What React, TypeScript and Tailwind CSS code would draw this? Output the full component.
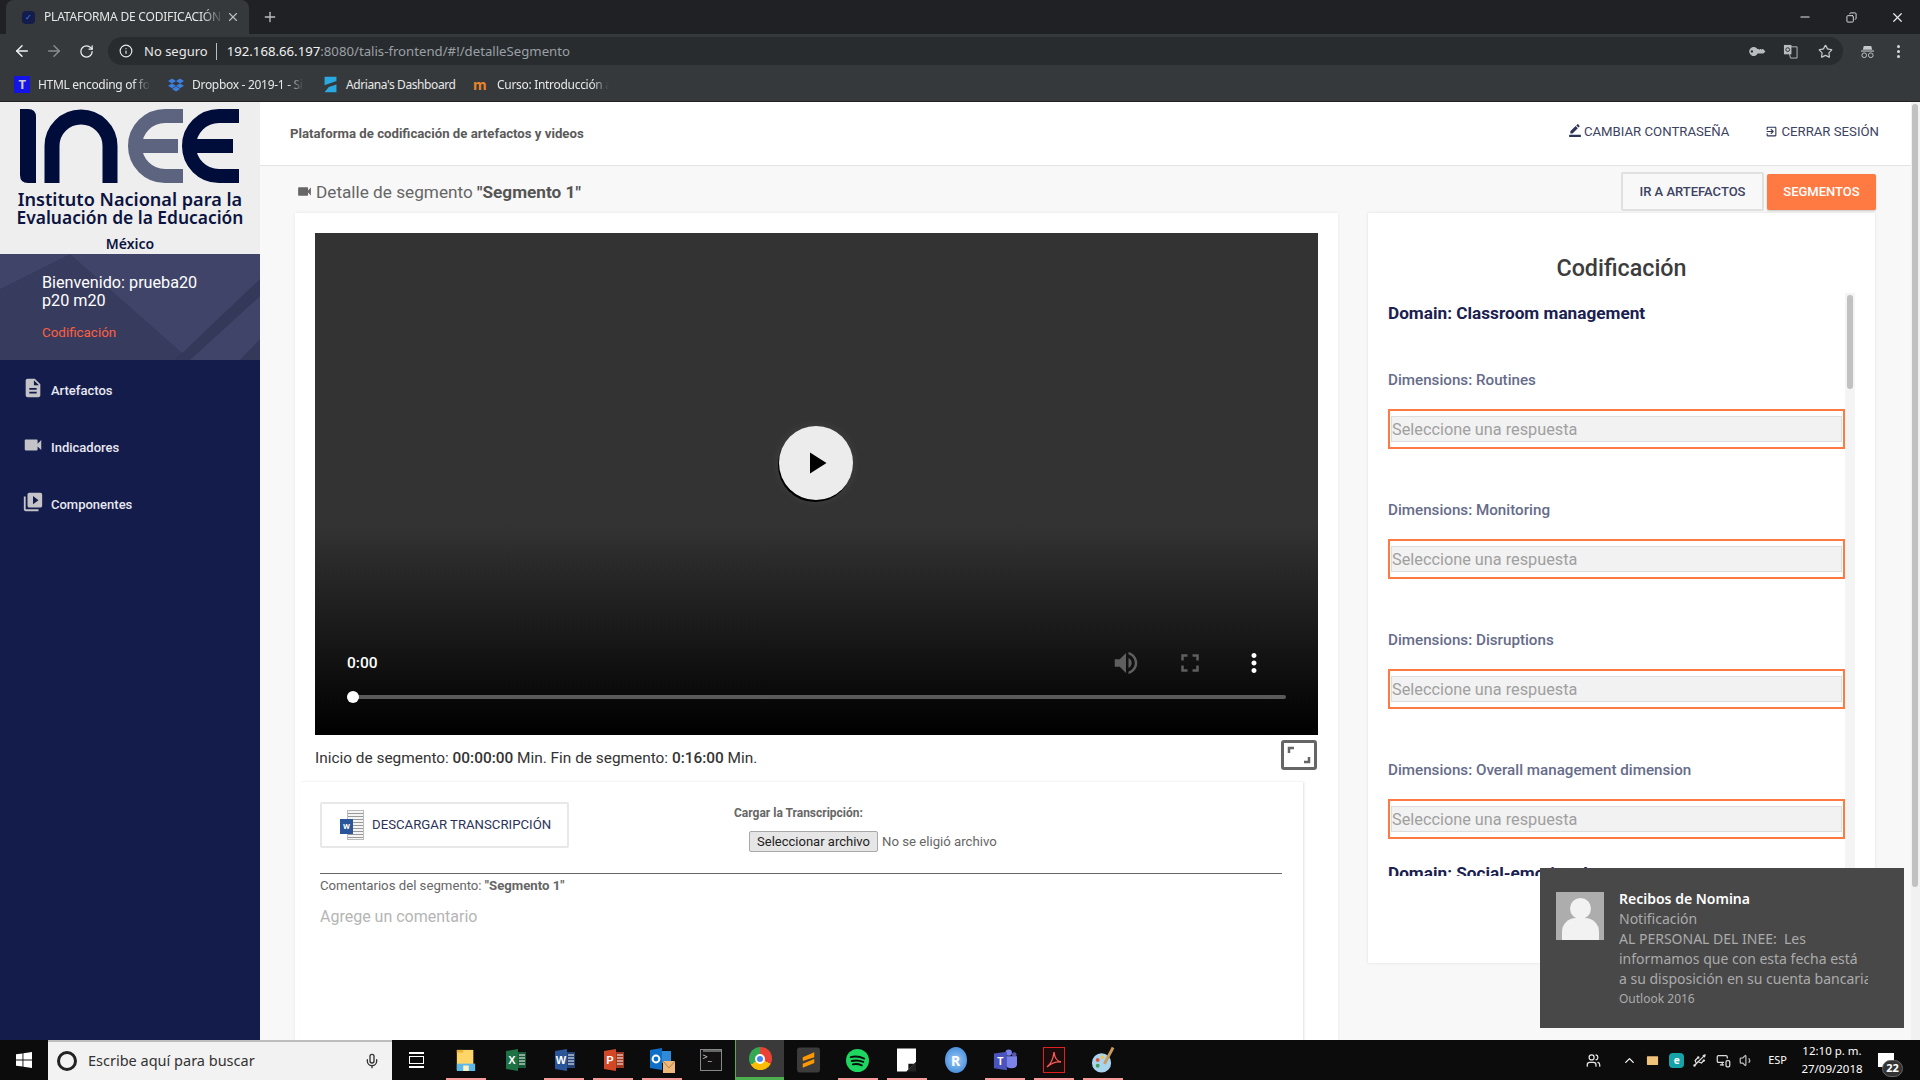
import { ArrowLeft, ArrowRight, RotateCw, Info, Star, X, Plus, Minus, Copy, ChevronUp, Mail, Mic, Users, Volume1, MonitorSmartphone, Usb } from "lucide-react";
import { FaKey } from "react-icons/fa";
import { MdDescription, MdVideocam, MdVideoLibrary, MdBorderColor, MdExitToApp, MdVolumeUp, MdFullscreen, MdMoreVert, MdPlayArrow } from "react-icons/md";

const DIMENSIONS = ["Routines", "Monitoring", "Disruptions", "Overall management dimension"];

const NAV = [
  { label: "Artefactos", Icon: MdDescription },
  { label: "Indicadores", Icon: MdVideocam },
  { label: "Componentes", Icon: MdVideoLibrary },
];

function BrowserChrome() {
  return (
    <div className="shrink-0 font-['Noto_Sans',sans-serif] text-white">
      <div className="flex h-[34px] items-end bg-[#202124] pl-[6px]">
        <div className="flex h-[34px] w-[243px] items-center rounded-t-lg bg-[#35393c] pl-[16px] pr-[8px]">
          <span className="flex h-[13px] w-[13px] items-center justify-center rounded-sm bg-[#141c4c] text-[8px] text-[#3b82f6]">✓</span>
          <span className="ml-[9px] w-[180px] overflow-hidden whitespace-nowrap text-[12px] tracking-[-0.2px] text-[#e6e6e6] [mask-image:linear-gradient(to_right,black_88%,transparent)]">PLATAFORMA DE CODIFICACIÓN DE</span>
          <X size={14} className="ml-[2px] text-[#bbbbbb]" />
        </div>
        <Plus size={16} className="mb-[9px] ml-[13px] text-[#bdbdbd]" />
        <div className="ml-auto flex h-full items-center text-[#e5e5e5]">
          <span className="flex w-[46px] justify-center"><Minus size={14} /></span>
          <span className="flex w-[46px] justify-center"><Copy size={11} className="-scale-x-100" /></span>
          <span className="flex w-[46px] justify-center"><X size={15} /></span>
        </div>
      </div>
      <div className="flex h-[34px] items-center bg-[#35393c]">
        <ArrowLeft size={18} className="ml-[13px] text-[#f1f1f1]" />
        <ArrowRight size={18} className="ml-[14px] text-[#8a8c8e]" />
        <RotateCw size={15} className="ml-[16px] text-[#f1f1f1]" />
        <div className="ml-[14px] flex h-[28px] w-[1735px] items-center rounded-full bg-[#292c2f] pl-[11px] pr-[10px]">
          <Info size={14} className="text-[#e8e8e8]" />
          <span className="ml-[11px] mt-[1px] text-[13px] text-[#e8e8e8]">No seguro</span>
          <span className="ml-[8px] h-[17px] w-px bg-[#bdbdbd]" />
          <span className="ml-[10px] mt-[1px] text-[13.2px] text-[#f1f1f1]">192.168.66.197<span className="text-[#9aa0a6]">:8080/talis-frontend/#!/detalleSegmento</span></span>
          <FaKey size={13} className="ml-auto -rotate-[135deg] text-[#b9bcbe]" />
          <svg viewBox="0 0 16 16" className="ml-[20px] h-[15px] w-[15px]">
            <path d="M5 3H15V15H8Z" fill="none" stroke="#b9bcbe" />
            <path d="M1 1H9V11H1Z" fill="#b9bcbe" />
            <circle cx="5" cy="6" r="2" fill="none" stroke="#292c2f" />
          </svg>
          <Star size={15} className="ml-[20px] text-[#c5c7c9]" />
        </div>
        <svg viewBox="0 0 16 16" className="ml-[17px] h-[15px] w-[15px]" fill="none" stroke="#c5c7c9">
          <path d="M4 2H12L13 6H3Z" fill="#c5c7c9" stroke="none" />
          <path d="M1 7.5H15" strokeWidth="1.2" />
          <circle cx="4.5" cy="12" r="2.5" />
          <circle cx="11.5" cy="12" r="2.5" />
        </svg>
        <span className="ml-[22px] flex flex-col gap-[2px]">
          <i className="h-[3px] w-[3px] rounded-full bg-[#d8d8d8]" />
          <i className="h-[3px] w-[3px] rounded-full bg-[#d8d8d8]" />
          <i className="h-[3px] w-[3px] rounded-full bg-[#d8d8d8]" />
        </span>
      </div>
      <div className="flex h-[34px] items-center border-b border-[#1f2022] bg-[#35393c] pl-[14px] text-[12px] tracking-[-0.3px] text-[#e8e8e8]">
        <span className="flex h-[17px] w-[16px] items-center justify-center bg-[#1414e6] text-[13px] font-bold leading-none text-[#cccccc]">T</span>
        <span className="ml-[8px] w-[112px] overflow-hidden whitespace-nowrap [mask-image:linear-gradient(to_right,black_85%,transparent)]">HTML encoding of fonts</span>
        <svg viewBox="0 0 20 20" className="ml-[18px] h-[16px] w-[16px]" fill="#3d7fe0">
          <path d="M5 2l5 3-5 3-5-3zM15 2l5 3-5 3-5-3zM5 8l5 3-5 3-5-3zM15 8l5 3-5 3-5-3zM5 15l5-3 5 3-5 3z" />
        </svg>
        <span className="ml-[8px] w-[112px] overflow-hidden whitespace-nowrap [mask-image:linear-gradient(to_right,black_85%,transparent)]">Dropbox - 2019-1 - Sistema</span>
        <svg viewBox="0 0 20 20" className="ml-[18px] h-[17px] w-[17px]" fill="#29a9e0">
          <path d="M3 1h14v5L3 11zM3 19l5-6 9-3v9z" />
        </svg>
        <span className="ml-[7px] w-[127px] whitespace-nowrap tracking-[-0.4px]">Adriana's Dashboard</span>
        <span className="w-[16px] text-[14px] font-bold leading-none text-[#e8842c]">m</span>
        <span className="ml-[8px] w-[112px] overflow-hidden whitespace-nowrap [mask-image:linear-gradient(to_right,black_85%,transparent)]">Curso: Introducción a la programación</span>
      </div>
    </div>
  );
}

function InneeLogo() {
  return (
    <div className="flex h-[152px] shrink-0 flex-col items-center bg-[#eeeeee] pt-[4px] font-['Noto_Sans',sans-serif] text-[#0b1440]">
      <svg viewBox="0 0 260 80" className="h-[80px] w-[260px] shrink-0">
        <path d="M20 3H28Q36 3 36 11V77H28Q20 77 20 69Z" fill="#000c3a" />
        <path d="M52 77V40A29 29 0 0 1 110 40V77" fill="none" stroke="#000c3a" strokeWidth="15" />
        <path d="M183 10H165A30 30 0 0 0 165 70H183M140 40H178" fill="none" stroke="#5d6480" strokeWidth="14" />
        <path d="M239 10H219A30 30 0 0 0 219 70H239M194 40H233" fill="none" stroke="#000c3a" strokeWidth="14" />
      </svg>
      <div className="mt-[4px] whitespace-nowrap text-center font-semibold leading-[18px]">
        <div className="text-[18.1px]">Instituto Nacional para la</div>
        <div className="text-[17.4px]">Evaluación de la Educación</div>
      </div>
      <div className="mt-[10px] text-[14px] font-semibold leading-[16px]">México</div>
    </div>
  );
}

function Sidebar() {
  return (
    <aside className="flex w-[260px] shrink-0 flex-col bg-[#141c4c] font-['Roboto',sans-serif]">
      <InneeLogo />
      <div className="relative h-[106px] shrink-0 overflow-hidden bg-[#3f4468] pl-[42px] pt-[20px]">
        <svg viewBox="0 0 260 106" className="absolute inset-0 h-full w-full">
          <path d="M70 0L190 106H0V35Z" fill="#373b5e" />
          <path d="M260 25L175 106H190L260 42Z" fill="#343859" />
          <path d="M260 85L240 106H260Z" fill="#343859" />
        </svg>
        <div className="relative text-[16.2px] leading-[18px] text-white">
          Bienvenido: prueba20
          <br />
          p20 m20
        </div>
        <div className="relative mt-[15px] text-[13.4px] leading-[16px] text-[#ff5f3f]">Codificación</div>
      </div>
      <nav className="flex flex-col pl-[24px] pt-[2px] text-[13px] text-[#e8e8f0]">
        {NAV.map(({ label, Icon }) => (
          <div key={label} className="flex h-[57px] items-center">
            <Icon size={22} className="-mt-[6px] -ml-[2px] text-[#c4c4c8]" />
            <span className="ml-[7px] mt-[1px] font-medium">{label}</span>
          </div>
        ))}
      </nav>
    </aside>
  );
}

function VideoPlayer() {
  return (
    <div className="relative h-[502px] bg-[linear-gradient(to_bottom,#333333_0%,#333333_58%,#000000_100%)]">
      <div className="absolute left-[464px] top-[193px] flex h-[74px] w-[74px] items-center justify-center rounded-full bg-[#ececec] shadow-[-1px_2px_0_#000,0_0_12px_rgba(255,255,255,0.08)]">
        <MdPlayArrow size={36} className="text-black" />
      </div>
      <div className="absolute bottom-[36px] left-[32px] right-[32px]">
        <div className="flex items-center pr-[17px]">
          <span className="mt-[2px] text-[15.5px] font-medium text-white">0:00</span>
          <MdVolumeUp size={30} className="ml-auto text-[#5f5f5f]" />
          <MdFullscreen size={30} className="ml-[34px] text-[#5f5f5f]" />
          <MdMoreVert size={30} className="ml-[34px] text-white" />
        </div>
        <div className="relative mt-[17px] h-[4px] rounded-full bg-[#5a5a5a]">
          <span className="absolute -top-[4px] left-0 h-[12px] w-[12px] rounded-full bg-white" />
        </div>
      </div>
    </div>
  );
}

function LeftCard() {
  return (
    <section className="w-[1043px] bg-white px-[20px] pt-[20px] shadow-[0_0_3px_rgba(0,0,0,0.08)]">
      <VideoPlayer />
      <div className="flex h-[47px] items-center justify-between pr-[1px]">
        <p className="text-[15.4px] text-[#333333]">
          Inicio de segmento: <strong className="font-medium">00:00:00</strong> Min. Fin de segmento: <strong className="font-medium">0:16:00</strong> Min.
        </p>
        <span className="mb-[8px] flex h-[30px] w-[36px] items-center justify-center rounded-[3px] border-[3px] border-[#666666]">
          <svg viewBox="0 0 30 24" className="h-[24px] w-[30px]" fill="none" stroke="#666666" strokeWidth="2.5">
            <path d="M5 10V5H10M25 14V19H20" />
          </svg>
        </span>
      </div>
      <div className="-ml-[15px] w-[1003px] pb-[300px] pl-[20px] pr-[21px] pt-[20px] shadow-[1px_0_2px_rgba(0,0,0,0.12)]">
        <div className="flex items-start">
          <button className="flex h-[46px] w-[249px] items-center rounded-[2px] border-2 border-[#e8e8e8] pl-[18px] text-[13.2px] text-[#2b3358]">
            <span className="relative h-[30px] w-[24px]">
              <span className="absolute right-0 top-0 h-[30px] w-[17px] border border-[#bbbbbb] bg-[repeating-linear-gradient(to_bottom,#f4f4f4_0,#f4f4f4_2px,#999999_2px,#999999_3px)]" />
              <span className="absolute left-0 top-[9px] flex h-[15px] w-[13px] items-center justify-center bg-[#2a5699] text-[8px] font-bold text-white">W</span>
            </span>
            <span className="ml-[8px]">DESCARGAR TRANSCRIPCIÓN</span>
          </button>
          <div className="ml-[165px] text-[12px]">
            <div className="pt-[3px] font-bold leading-[16px] text-[#666666]">Cargar la Transcripción:</div>
            <div className="ml-[15px] mt-[10px] flex items-center">
              <span className="flex h-[21px] w-[129px] items-center justify-center rounded-[2px] border border-[#a8a8a8] bg-[#e6e6e6] text-[13px] text-[#222222]">Seleccionar archivo</span>
              <span className="ml-[4px] text-[13.2px] text-[#666666]">No se eligió archivo</span>
            </div>
          </div>
        </div>
        <div className="mt-[21px] border-t border-[#666666] pt-[4px] text-[13.2px] leading-[16px] text-[#666666]">
          Comentarios del segmento: <strong>"Segmento 1"</strong>
        </div>
        <div className="mt-[13px] text-[16px] leading-[20px] text-[#b5b5b5]">Agrege un comentario</div>
      </div>
    </section>
  );
}

function RightCard() {
  return (
    <section className="ml-[30px] h-[750px] w-[507px] bg-white shadow-[0_0_3px_rgba(0,0,0,0.1)]">
      <h2 className="pt-[42px] text-center text-[23.3px] font-medium leading-[26px] text-[#3c3c3c]">Codificación</h2>
      <div className="relative ml-[20px] mt-[12px] h-[583px] w-[467px] overflow-hidden">
        <div className="pr-[10px] pt-[8px]">
          <h3 className="text-[17.2px] font-bold leading-[24px] text-[#1a2050]">Domain: Classroom management</h3>
          <div className="h-[12px]" />
          {DIMENSIONS.map((d) => (
            <div key={d} className="mt-[31px] h-[99px]">
              <div className="text-[15.2px] font-medium leading-[24px] text-[#666c8a]">Dimensions: {d}</div>
              <div className="mt-[17px] border-[2px] border-[#ff7a42] px-[1px] py-[5px]">
                <div className="h-[26px] border border-[#dddddd] bg-[#f2f2f2] text-[16.3px] leading-[26px] text-[#a0a0a0]">Seleccione una respuesta</div>
              </div>
            </div>
          ))}
          <h3 className="mt-[4px] text-[17.2px] font-bold leading-[24px] text-[#1a2050]">Domain: Social-emotional support</h3>
        </div>
        <div className="absolute bottom-0 right-0 top-0 w-[10px] bg-[#f4f4f4] px-[2px] pt-[2px]">
          <div className="h-[94px] rounded-full bg-[#c1c1c1]" />
        </div>
      </div>
    </section>
  );
}

function Main() {
  return (
    <main className="flex min-w-0 flex-1 overflow-hidden bg-[#f8f8f8] font-['Roboto',sans-serif]">
      <div className="min-w-0 flex-1">
        <header className="flex h-[64px] items-center justify-between border-b border-[#e4e4e4] bg-white pl-[30px] pr-[32px]">
          <span className="text-[13.2px] font-bold text-[#5a5a5a]">Plataforma de codificación de artefactos y videos</span>
          <div className="-mt-[4px] flex items-center text-[13.2px] text-[#3c4262]">
            <MdBorderColor size={14} className="mb-[3px] text-[#2b3358]" />
            <span className="ml-[2px]">CAMBIAR CONTRASEÑA</span>
            <MdExitToApp size={13} className="ml-[36px] text-[#2b3358]" />
            <span className="ml-[3px]">CERRAR SESIÓN</span>
          </div>
        </header>
        <div className="flex h-[47px] items-center pl-[36px] pr-[35px] pt-[4px]">
          <MdVideocam size={17} className="text-[#666666]" />
          <span className="ml-[3px] mt-[2px] text-[17.2px] text-[#666666]">
            Detalle de segmento <strong className="font-bold text-[#555555]">"Segmento 1"</strong>
          </span>
          <button className="ml-auto h-[39px] w-[143px] rounded-[2px] border-2 border-[#e0e0e0] bg-[#f8f8f8] text-[13px] font-medium text-[#3c4262]">IR A ARTEFACTOS</button>
          <button className="ml-[3px] h-[36px] w-[109px] rounded-[2px] bg-[#ff7a42] text-[13px] font-medium text-white shadow-[0_1px_2px_rgba(0,0,0,0.2)]">SEGMENTOS</button>
        </div>
        <div className="flex items-start pl-[35px]">
          <LeftCard />
          <RightCard />
        </div>
      </div>
      <div className="w-[9px] shrink-0 bg-[#f1f1f1] pl-[1px] pr-[2px] pt-[2px]">
        <div className="h-[783px] rounded-full bg-[#c1c1c1]" />
      </div>
    </main>
  );
}

function Notification() {
  return (
    <div className="absolute bottom-[52px] right-[16px] flex h-[160px] w-[364px] bg-[#484848] pl-[16px] pt-[24px] font-['Noto_Sans',sans-serif]">
      <div className="relative h-[48px] w-[48px] shrink-0 overflow-hidden bg-[#adadad]">
        <span className="absolute left-[14px] top-[6px] h-[21px] w-[21px] rounded-full bg-[#f2f2f2]" />
        <span className="absolute left-[6px] top-[26px] h-[30px] w-[37px] rounded-t-[14px] bg-[#f2f2f2]" />
      </div>
      <div className="ml-[15px] w-[249px] overflow-hidden whitespace-nowrap pt-[1px] text-[14px] leading-[20px] text-[#ababab]">
        <div className="-mt-[4px] font-semibold text-white">Recibos de Nomina</div>
        <div>Notificación</div>
        <div>AL PERSONAL DEL INEE:&nbsp; Les</div>
        <div>informamos que con esta fecha está</div>
        <div>a su disposición en su cuenta bancaria</div>
        <div className="text-[12px]">Outlook 2016</div>
      </div>
    </div>
  );
}

// little hand drawn tiles for the pinned apps
function OfficeIcon({ color, letter }: { color: string; letter: string }) {
  return (
    <svg viewBox="0 0 24 24" className="h-[26px] w-[24px]">
      <path d="M3 3L15 1V23L3 21Z" fill={color} />
      <rect x="15" y="4" width="8" height="16" fill={color} opacity="0.75" />
      <path d="M16 7H22M16 10H22M16 13H22M16 16H22" stroke="#ffffff" strokeWidth="1" />
      <text x="9" y="16" textAnchor="middle" fontSize="11" fontWeight="700" fill="#ffffff" fontFamily="Liberation Sans">{letter}</text>
    </svg>
  );
}

function AppIcon({ name }: { name: string }) {
  switch (name) {
    case "explorer":
      return (
        <svg viewBox="0 0 24 26" className="h-[26px] w-[22px]">
          <path d="M2 2H20V24H2Z" fill="#ffd568" />
          <path d="M2 2H9V5H2Z" fill="#e8b53c" />
          <path d="M2 17H22V25H2Z" fill="#5cb8e8" />
          <path d="M9 19H15V25H9Z" fill="#fff3c4" />
        </svg>
      );
    case "excel":
      return <OfficeIcon color="#1e7145" letter="X" />;
    case "word":
      return <OfficeIcon color="#2a5699" letter="W" />;
    case "ppt":
      return <OfficeIcon color="#d24726" letter="P" />;
    case "outlook":
      return (
        <svg viewBox="0 0 26 26" className="h-[28px] w-[26px]">
          <path d="M1 3L13 1V23L1 21Z" fill="#0f6fc6" />
          <rect x="13" y="4" width="9" height="12" fill="#2f8ad8" />
          <circle cx="7" cy="12" r="3.4" fill="none" stroke="#ffffff" strokeWidth="2" />
          <path d="M14 14H26V26H14Z" fill="#eeb97c" />
          <path d="M14 14L20 21L26 14" fill="none" stroke="#b58045" />
        </svg>
      );
    case "cmd":
      return (
        <span className="h-[22px] w-[22px] border border-[#888888] bg-[#111111] pl-[2px] text-[9px] leading-[10px] text-[#dddddd]">
          <span className="block h-[2px] w-full bg-[#666666]" />
          {">_"}
        </span>
      );
    case "chrome":
      return (
        <span className="flex h-[23px] w-[23px] items-center justify-center rounded-full bg-[conic-gradient(#ea4335_0_33%,#fbbc05_33%_66%,#34a853_66%)]">
          <span className="h-[10px] w-[10px] rounded-full border-2 border-white bg-[#4285f4]" />
        </span>
      );
    case "sublime":
      return (
        <svg viewBox="0 0 24 26" className="h-[26px] w-[23px]">
          <rect width="24" height="26" rx="3" fill="#3c3c3c" />
          <path d="M18 5L6 10V14L18 10ZM18 12L6 17V21L18 16Z" fill="#ff9800" />
        </svg>
      );
    case "spotify":
      return (
        <svg viewBox="0 0 24 24" className="h-[23px] w-[23px]">
          <circle cx="12" cy="12" r="12" fill="#1ed760" />
          <path d="M5 8.5Q12 6.5 19 10M6 12.5Q12 11 18 13.5M7 16Q12 15 16.5 17" fill="none" stroke="#0c0c0c" strokeWidth="2" strokeLinecap="round" />
        </svg>
      );
    case "notes":
      return (
        <svg viewBox="0 0 20 24" className="h-[24px] w-[19px]">
          <path d="M0 0H20V14L10 24H0Z" fill="#ffffff" />
          <path d="M20 14V24H10Z" fill="#222222" />
          <path d="M12 22V16H18Z" fill="#111111" />
        </svg>
      );
    case "r":
      return (
        <span className="flex h-[26px] w-[22px] items-center justify-center rounded-[50%] bg-[radial-gradient(circle,#9cc8f2,#2f7fd8)] text-[14px] font-bold text-white">R</span>
      );
    case "teams":
      return (
        <svg viewBox="0 0 26 26" className="h-[26px] w-[24px]">
          <circle cx="17" cy="5" r="3.5" fill="#7b83eb" />
          <circle cx="23" cy="7" r="2.5" fill="#5558af" />
          <path d="M14 9H26V18Q26 22 20 22T14 18Z" fill="#7b83eb" />
          <path d="M1 6L15 4V24L1 22Z" fill="#4b53bc" />
          <text x="8" y="18" textAnchor="middle" fontSize="11" fontWeight="700" fill="#ffffff" fontFamily="Liberation Sans">T</text>
        </svg>
      );
    case "acrobat":
      return (
        <svg viewBox="0 0 22 26" className="h-[26px] w-[22px]">
          <rect x="0.5" y="0.5" width="21" height="25" fill="#1c0b0b" stroke="#e02020" />
          <path d="M4 20Q10 15 11 5Q12 14 18 15Q11 14 4 20Z" fill="none" stroke="#ff5a5a" strokeWidth="1.3" />
        </svg>
      );
    default:
      return (
        <svg viewBox="0 0 26 28" className="h-[28px] w-[25px]">
          <ellipse cx="12" cy="17" rx="10" ry="10" fill="#a9d4ee" />
          <circle cx="8" cy="14" r="2" fill="#e2543c" />
          <circle cx="13" cy="11" r="2" fill="#f2c14e" />
          <circle cx="8" cy="20" r="2" fill="#3f9e5a" />
          <path d="M24 1L15 18" stroke="#c99a5b" strokeWidth="3" />
        </svg>
      );
  }
}

const TASK_APPS = [
  { name: "explorer", line: true },
  { name: "excel", line: false },
  { name: "word", line: true },
  { name: "ppt", line: true },
  { name: "outlook", line: true },
  { name: "cmd", line: false },
  { name: "chrome", line: false },
  { name: "sublime", line: false },
  { name: "spotify", line: true },
  { name: "notes", line: true },
  { name: "r", line: false },
  { name: "teams", line: true },
  { name: "acrobat", line: true },
  { name: "paint", line: true },
];

function Taskbar() {
  return (
    <footer className="flex h-[40px] shrink-0 items-stretch bg-[#0c0c0c] font-['Noto_Sans',sans-serif]">
      <div className="flex w-[48px] items-center justify-center">
        <svg viewBox="0 0 16 16" className="h-[16px] w-[16px]" fill="#ffffff">
          <path d="M0 2.3L6.5 1.4V7.6H0ZM7.4 1.3L16 0V7.6H7.4ZM0 8.4H6.5V14.6L0 13.7ZM7.4 8.4H16V16L7.4 14.7Z" />
        </svg>
      </div>
      <div className="flex w-[344px] items-center border-t-2 border-[#bdbdbd] bg-[#f2f2f2] pl-[9px] pr-[12px]">
        <span className="h-[20px] w-[20px] rounded-full border-[3px] border-[#222222]" />
        <span className="ml-[11px] text-[14.5px] text-[#333333]">Escribe aquí para buscar</span>
        <Mic size={16} className="ml-auto text-[#333333]" />
      </div>
      <div className="flex w-[49px] items-center justify-center">
        <span className="flex flex-col gap-[2px]">
          <i className="h-[2px] w-[15px] bg-white" />
          <i className="h-[8px] w-[15px] border border-white" />
          <i className="h-[2px] w-[15px] bg-white" />
        </span>
      </div>
      {TASK_APPS.map((a) => (
        <div key={a.name} className={a.name === "chrome" ? "relative flex w-[49px] items-center justify-center border-b-[3px] border-l border-[#4caf50] bg-[#3a3a3a]" : "relative flex w-[49px] items-center justify-center"}>
          <AppIcon name={a.name} />
          {a.line && <span className="absolute bottom-0 left-[5px] h-[2px] w-[40px] bg-[#f99a9a]" />}
        </div>
      ))}
      <div className="ml-auto flex items-center pr-[26px] text-white">
        <Users size={15} className="text-[#e8e8e8]" />
        <ChevronUp size={15} className="ml-[21px]" />
        <Mail size={15} fill="#f0c27a" className="ml-[8px] text-[#0c0c0c]" />
        <span className="ml-[9px] flex h-[15px] w-[15px] items-center justify-center rounded-[4px] bg-[#16a3a8] text-[10px] font-bold">e</span>
        <Usb size={15} className="ml-[8px] text-[#dddddd]" />
        <MonitorSmartphone size={15} className="ml-[9px] text-[#dddddd]" />
        <Volume1 size={15} className="ml-[8px] text-[#bbbbbb]" />
        <span className="ml-[14px] text-[11px]">ESP</span>
        <span className="ml-[15px] flex w-[60px] flex-col items-center text-[11.5px] leading-[18px]">
          <span>12:10 p. m.</span>
          <span>27/09/2018</span>
        </span>
        <span className="relative ml-[16px] h-[14px] w-[16px] bg-white">
          <span className="absolute -bottom-[10px] -right-[9px] flex h-[17px] w-[21px] items-center justify-center rounded-full border border-[#666666] bg-[#333333] text-[11px] font-bold">22</span>
        </span>
      </div>
    </footer>
  );
}

export default function App() {
  return (
    <div className="relative flex h-screen w-full flex-col overflow-hidden">
      <BrowserChrome />
      <div className="flex min-h-0 flex-1">
        <Sidebar />
        <Main />
      </div>
      <Taskbar />
      <Notification />
    </div>
  );
}
